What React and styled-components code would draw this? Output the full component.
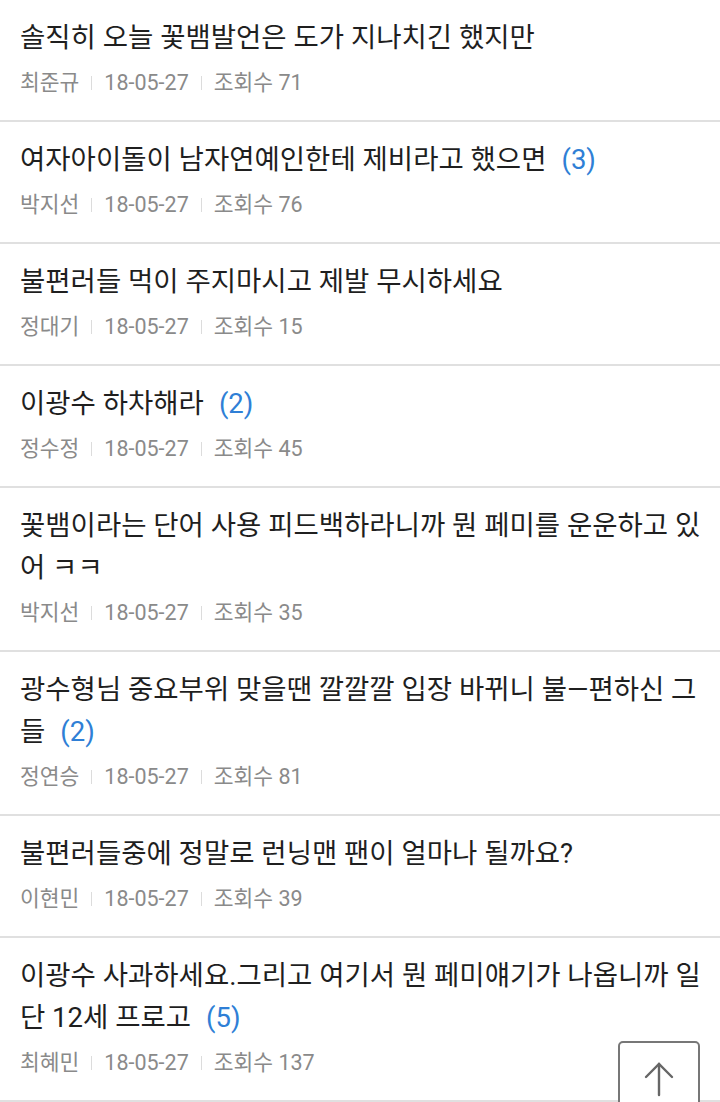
import React from 'react';
import styled, { createGlobalStyle } from 'styled-components';

const GlobalStyle = createGlobalStyle`
  body {
    margin: 0;
    background: #fff;
    font-family: Roboto, "Noto Sans CJK KR", sans-serif;
  }
`;

const posts = [
  { title: '솔직히 오늘 꽃뱀발언은 도가 지나치긴 했지만', author: '최준규', date: '18-05-27', views: 71 },
  { title: '여자아이돌이 남자연예인한테 제비라고 했으면', count: 3, author: '박지선', date: '18-05-27', views: 76 },
  { title: '불편러들 먹이 주지마시고 제발 무시하세요', author: '정대기', date: '18-05-27', views: 15 },
  { title: '이광수 하차해라', count: 2, author: '정수정', date: '18-05-27', views: 45 },
  { title: '꽃뱀이라는 단어 사용 피드백하라니까 뭔 페미를 운운하고 있어 ㅋㅋ', author: '박지선', date: '18-05-27', views: 35 },
  { title: '광수형님 중요부위 맞을땐 깔깔깔 입장 바뀌니 불—편하신 그들', count: 2, author: '정연승', date: '18-05-27', views: 81 },
  { title: '불편러들중에 정말로 런닝맨 팬이 얼마나 될까요?', author: '이현민', date: '18-05-27', views: 39 },
  { title: '이광수 사과하세요.그리고 여기서 뭔 페미얘기가 나옵니까 일단 12세 프로고', count: 5, author: '최혜민', date: '18-05-27', views: 137 },
];

const List = styled.ul`
  list-style: none;
  margin: 0;
  padding: 0;
`;

const Item = styled.li`
  padding: 17px 12px 22px 20px;
  border-bottom: 2px solid #e0e0e0;
`;

const Title = styled.div`
  font-size: 27.5px;
  line-height: 42px;
  color: #1f1f1f;
  word-break: break-all;
`;

const Count = styled.span`
  color: #2f7fd6;
  margin-left: 15px;
`;

const Meta = styled.div`
  display: flex;
  align-items: center;
  margin-top: 9px;
  font-size: 21.5px;
  line-height: 30px;
  color: #8a8a8a;
`;

const Sep = styled.span`
  width: 1px;
  height: 14px;
  background: #dcdcdc;
  margin: 0 12px;
`;

const TopButton = styled.button`
  position: fixed;
  left: 618px;
  top: 1041px;
  width: 82px;
  height: 80px;
  border: 2px solid #777;
  border-radius: 5px;
  background: #fff;
  padding: 18px 0 0;
  display: flex;
  justify-content: center;
  align-items: flex-start;
`;

export default function App() {
  return (
    <>
      <GlobalStyle />
      <List>
        {posts.map((p, i) => (
          <Item key={i}>
            <Title>
              {p.title}
              {p.count ? <Count>({p.count})</Count> : null}
            </Title>
            <Meta>
              <span>{p.author}</span>
              <Sep />
              <span>{p.date}</span>
              <Sep />
              <span>조회수 {p.views}</span>
            </Meta>
          </Item>
        ))}
      </List>
      <TopButton aria-label="맨 위로">
        <svg width="32" height="36" viewBox="0 0 32 36" fill="none" stroke="#666" strokeWidth="2.4" strokeLinecap="round">
          <path d="M16 3 V34" />
          <path d="M3 16 L16 3 L29 16" />
        </svg>
      </TopButton>
    </>
  );
}
